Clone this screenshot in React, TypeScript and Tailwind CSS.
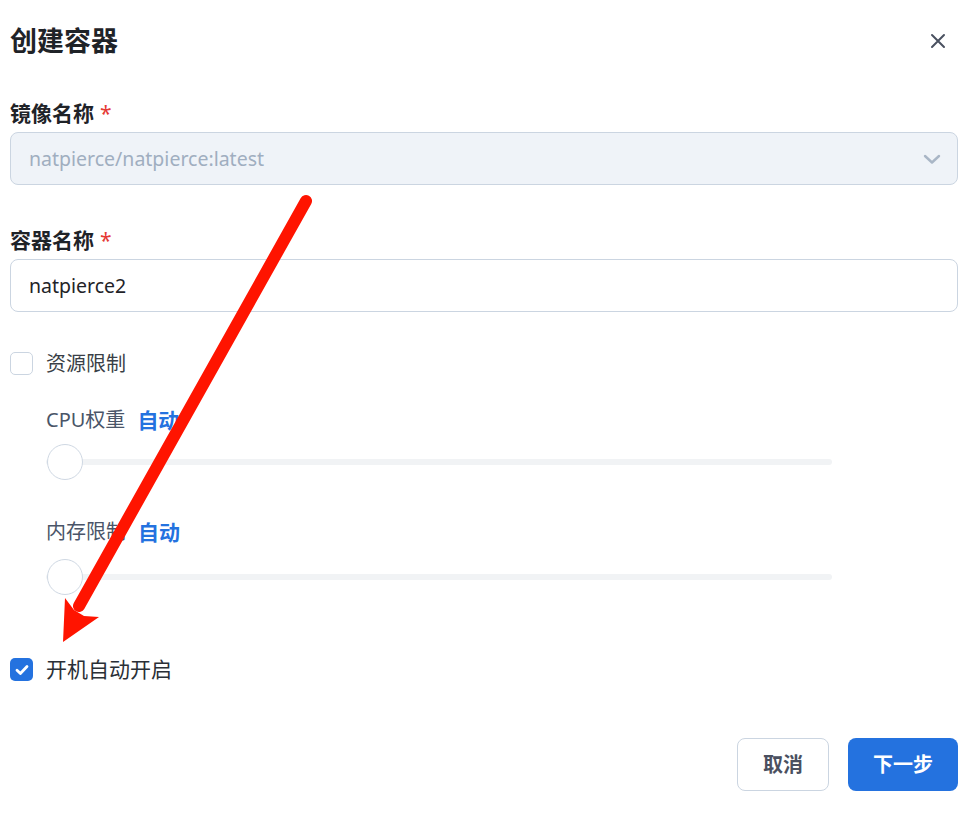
import React from "react";

const font = { fontFamily: '"Noto Sans", "Noto Sans CJK SC", sans-serif' };

function Slider() {
  return (
    <div className="relative h-[36px] w-[786px] flex items-center">
      <div className="h-[6px] w-full rounded-full bg-[#f1f3f5]" />
      <div className="absolute left-[1px] top-0 h-[36px] w-[36px] rounded-full border border-[#cfd8e3] bg-white" />
    </div>
  );
}

export default function App() {
  return (
    <div className="relative w-[966px] h-[815px] bg-white overflow-hidden" style={font}>
      <div className="flex flex-col pl-[10px] pr-[8px]">
        <div className="flex items-center justify-between h-[82px] pb-[1px]">
          <h1 className="text-[27px] font-bold text-[#1f2328] leading-none">创建容器</h1>
          <svg width="16" height="16" viewBox="0 0 16 16" className="mr-[12px]">
            <path d="M2 2 L14 14 M14 2 L2 14" stroke="#4a5160" strokeWidth="2" strokeLinecap="round" />
          </svg>
        </div>

        <div className="mt-[19px] h-[24px] flex items-center text-[21px] font-bold text-[#1f2328] leading-none">
          镜像名称<span className="ml-[6px] text-[#e53935] font-normal">*</span>
        </div>
        <div className="mt-[7px] h-[53px] rounded-[8px] border border-[#cbd5e1] bg-[#eff3f8] flex items-center justify-between pl-[18px] pr-[16px]">
          <span className="text-[19.5px] text-[#a0aec0]">natpierce/natpierce:latest</span>
          <svg width="18" height="12" viewBox="0 0 18 12">
            <path d="M2 3 L9 9.5 L16 3" stroke="#a9b6c6" strokeWidth="2.4" fill="none" strokeLinecap="round" strokeLinejoin="round" />
          </svg>
        </div>

        <div className="mt-[43px] h-[24px] flex items-center text-[21px] font-bold text-[#1f2328] leading-none">
          容器名称<span className="ml-[6px] text-[#e53935] font-normal">*</span>
        </div>
        <div className="mt-[7px] h-[53px] rounded-[8px] border border-[#cbd5e1] bg-white flex items-center pl-[18px]">
          <span className="text-[19.5px] text-[#1f2328]">natpierce2</span>
        </div>

        <div className="mt-[40px] flex items-center h-[23px]">
          <div className="w-[23px] h-[23px] rounded-[5px] border border-[#cbd5e1] bg-white" />
          <span className="ml-[13px] text-[20px] text-[#3a3f47]">资源限制</span>
        </div>

        <div className="ml-[36px] flex flex-col">
          <div className="mt-[33px] h-[24px] flex items-center text-[20px] leading-none">
            <span className="text-[#4a5568]">CPU权重</span>
            <span className="ml-[12px] text-[21px] font-bold text-[#2472df]">自动</span>
          </div>
          <div className="mt-[12px]">
            <Slider />
          </div>
          <div className="mt-[40px] h-[24px] flex items-center text-[20px] leading-none">
            <span className="text-[#4a5568]">内存限制</span>
            <span className="ml-[12px] text-[21px] font-bold text-[#2472df]">自动</span>
          </div>
          <div className="mt-[15px]">
            <Slider />
          </div>
        </div>

        <div className="mt-[63px] flex items-center h-[23px]">
          <div className="w-[23px] h-[23px] rounded-[5px] bg-[#2472df] flex items-center justify-center">
            <svg width="16" height="16" viewBox="0 0 16 16">
              <path d="M3 8.2 L6.4 11.4 L13 4.6" stroke="white" strokeWidth="2.8" fill="none" strokeLinecap="round" strokeLinejoin="round" />
            </svg>
          </div>
          <span className="ml-[13px] text-[21px] text-[#2a2f36]">开机自动开启</span>
        </div>

        <div className="mt-[57px] flex justify-end gap-[19px]">
          <button className="h-[53px] w-[92px] rounded-[8px] border border-[#cbd5e1] bg-white text-[20px] font-bold text-[#4a5060]">取消</button>
          <button className="h-[53px] w-[110px] rounded-[8px] bg-[#2472df] text-[20px] font-bold text-white">下一步</button>
        </div>
      </div>

      <svg className="absolute left-0 top-0 pointer-events-none" width="966" height="815" viewBox="0 0 966 815">
        <line x1="306" y1="201" x2="79" y2="606" stroke="#ff1400" strokeWidth="12" strokeLinecap="round" />
        <polygon points="63,642 65,598 74,610 84,616 99,617" fill="#ff1400" />
      </svg>
    </div>
  );
}
